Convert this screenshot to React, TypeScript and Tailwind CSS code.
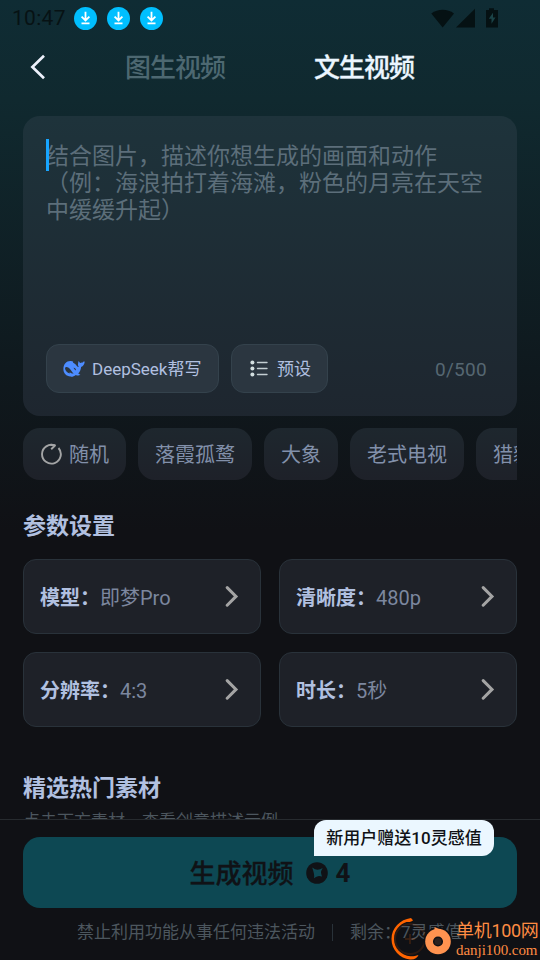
import React from 'react';

const chips = ['落霞孤鹜', '大象', '老式电视', '猎豹奔跑'];

const params = [
    { label: '模型：', value: '即梦Pro' },
    { label: '清晰度：', value: '480p' },
    { label: '分辨率：', value: '4:3' },
    { label: '时长：', value: '5秒' },
];

const DownloadBadge: React.FC = () => (
    <svg width="23" height="23" viewBox="0 0 23 23" fill="none">
        <circle cx="11.5" cy="11.5" r="11.5" fill="#00bfff" />
        <path d="M11.5 4.8V12.6M7.6 9.6l3.9 3.9 3.9-3.9M7.5 16.3h8" stroke="#fff" strokeWidth="1.8" />
    </svg>
);

const WhaleIcon: React.FC = () => (
    <svg width="22" height="18" viewBox="0 0 22 18" fill="#4d8cff">
        <path d="M0.4 9.2C0.4 4.2 3.4 1.2 7.2 1.1c1.4-0.1 2.4 0.2 3 0.6-0.4 0.3-0.4 0.7 0.1 1.1 1.5 0.9 2.9 2.1 4 3.7 0.6 0.5 1 0.5 1.5 0.3-0.8-0.9-1-2-0.7-3.2 0.1-0.9 0.2-1.9 0.5-2.6 0.7 0.6 0.8 1.5 1.5 1.9 1.5 0 2.3-0.3 3-0.9 0.4-0.4 0.9-0.5 1.6-0.3-0.2 2.6-1.5 4.6-3.6 5.2-0.3 2.9-1.3 4.9-2.9 6.5 0.7 0.6 1.6 0.7 2.2 1.4-1.4 0.9-3.2 0.8-4.6 0.1-1.6 1.3-3.5 2-5.4 1.7C3.4 16.1 0.4 13.2 0.4 9.2z" />
        <path d="M2 8.3c0.2-1 0.8-1.400 1.700-1.200 2.300 0.500 3.700 2.200 4.800 3.900 0.700 1.100 1.400 1.900 2.200 2.400-1.400 0.400-2.700-0.100-3.600-0.800-0.700-0.200-0.600 0.300-0.300 0.900C4.200 12.800 2.100 10.900 2 8.300z" fill="#2b3640" />
        <path d="M10.600 7.700c1.300-0.100 2.400 1 2.400 2.500-0.600 0.200-1.100-0.200-1.400-0.800-0.200-0.600-0.800-0.700-1-1.700z" fill="#2b3640" />
    </svg>
);

const ListIcon: React.FC = () => (
    <svg width="18" height="18" viewBox="0 0 18 18" fill="#d3dfe0">
        <circle cx="2.4" cy="2.5" r="2" />
        <circle cx="2.4" cy="8.5" r="2" />
        <circle cx="2.4" cy="14.5" r="2" />
        <path d="M7.5 2.5h9.5M7.5 8.5h9.5M7.5 14.5h9.5" stroke="#c4cfd3" strokeWidth="1.4" strokeLinecap="round" />
    </svg>
);

const RefreshIcon: React.FC = () => (
    <svg width="22" height="22" viewBox="0 0 22 22" fill="none" stroke="#a3a4a5" strokeWidth="1.9">
        <path d="M18.5 5A9.4 9.4 0 1 1 15 2.5L11.2 6.2" strokeLinejoin="round" />
        <path d="M10.5 1.7l4.5 0.8" />
    </svg>
);

const Chevron: React.FC = () => (
    <svg width="14" height="22" viewBox="0 0 14 22" fill="none" stroke="#a4a4a4" strokeWidth="3">
        <path d="M2.2 1.6L11 10.4 2.2 19.2" strokeLinecap="round" />
    </svg>
);

const CoinIcon: React.FC = () => (
    <svg width="22" height="22" viewBox="0 0 22 22">
        <circle cx="11" cy="11" r="10.8" fill="#101216" />
        <path d="M6.2 5.5Q9.5 8 11.8 7.8 14 7.4 16.7 5.9 15 8.600 15 10.500 15.200 12.800 16.200 14.600 13.800 13.900 12 14.200 9.800 14.600 8 16.200 8.400 13.700 7.900 11.600 7.400 9 6.200 5.500z" fill="#0e4853" />
    </svg>
);

const StatusBar: React.FC = () => (
    <div className="flex h-[37px] shrink-0 items-center pl-[12px] pr-[41px]">
        <span className="w-[62px] pt-px text-[21px] tracking-[0.3px] text-[#071214]">10:47</span>
        <div className="flex gap-[10px]">
            <DownloadBadge />
            <DownloadBadge />
            <DownloadBadge />
        </div>
        <svg className="ml-auto" width="68" height="22" viewBox="0 0 68 22" fill="#051113">
            <path d="M0.3 5.500C7 0.600 16.500 0.600 23 5.500L11.700 19.400z" />
            <path d="M44 0.700V19.400H25z" />
            <path d="M55 2h3V0.300h5V2h4v17.400H55z" />
            <path d="M62 4.800l-4.200 6h2.700v5l4-6.200h-2.500z" fill="#1b4347" />
        </svg>
    </div>
);

const App: React.FC = () => {
    return (
        <div className="relative flex h-[960px] w-[540px] flex-col overflow-hidden bg-[#101115] bg-[linear-gradient(to_bottom,#0f2c34_0px,#10292f_100px,#0f191e_370px,#101115_530px)] font-['Roboto','Noto_Sans_CJK_SC',sans-serif]">
            <StatusBar />

            {/* Tabs */}
            <header className="flex h-[60px] shrink-0 items-center pl-[30px] text-[26px] leading-none font-medium tracking-[-1px]">
                <svg width="16" height="26" viewBox="0 0 16 26" fill="none" stroke="#edf1fc" strokeWidth="2.7">
                    <path d="M14 1.8L2.4 13 14 24.2" />
                </svg>
                <span className="ml-[79px] pt-[2px] text-[#4d6871]">图生视频</span>
                <span className="ml-[89px] pt-[2px] text-[#ebf6ff] [-webkit-text-stroke:0.3px_#ebf6ff]">文生视频</span>
            </header>

            {/* Scrollable content */}
            <main className="min-h-0 flex-1 overflow-hidden px-[23px] pt-[19px]">
                <section className="flex h-[300px] flex-col rounded-[17px] bg-[linear-gradient(to_bottom,#1e333b,#1e262f)] px-[23px] pt-[27px] pb-[23px]">
                    <div className="relative text-[23px] leading-[27px] text-[#5c6e7a]">
                        <span className="absolute -top-[4px] left-0 h-8 w-[3px] bg-[#17a5ff]" />
                        <p>结合图片，描述你想生成的画面和动作</p>
                        <p>（例：海浪拍打着海滩，粉色的月亮在天空</p>
                        <p>中缓缓升起）</p>
                    </div>
                    <div className="mt-auto flex items-center gap-3 text-[17px] text-[#b1c0e0]">
                        <button className="flex h-[49px] w-[173px] items-center gap-[7px] rounded-[13px] border border-[#34424c] bg-[#2b3640] pl-[16px] whitespace-nowrap">
                            <WhaleIcon />
                            <span className="pt-[2px]">DeepSeek帮写</span>
                        </button>
                        <button className="flex h-[49px] w-[97px] items-center gap-[9px] rounded-[13px] border border-[#34424c] bg-[#2b3640] pl-[18px] whitespace-nowrap">
                            <ListIcon />
                            <span className="pt-[2px]">预设</span>
                        </button>
                        <span className="mr-[7px] ml-auto pt-[3px] text-[19px] tracking-[0.3px] text-[#566772]">0/500</span>
                    </div>
                </section>

                <div className="mt-3 flex h-[52px] gap-3 overflow-hidden text-[20px] text-[#8290aa]">
                    <button className="flex shrink-0 items-center gap-[7px] rounded-[17px] bg-[linear-gradient(to_bottom,#1e272e,#1e2129)] px-[17px]">
                        <RefreshIcon />
                        <span className="pt-[2px]">随机</span>
                    </button>
                    {chips.map((chip) => (
                        <button key={chip} className="shrink-0 rounded-[17px] bg-[linear-gradient(to_bottom,#1e272e,#1e2129)] px-[17px] pt-[2px]">
                            {chip}
                        </button>
                    ))}
                </div>

                <h2 className="mt-[30px] text-[23px] leading-[34px] font-bold text-[#b1c0e0]">参数设置</h2>
                <div className="mt-[15px] grid grid-cols-2 gap-[18px]">
                    {params.map((param) => (
                        <div key={param.label} className="flex h-[75px] items-center rounded-[13px] border border-[#29323a] bg-[#1e2128] pr-[21px] pl-[16px] text-[20px]">
                            <span className="pt-[3px] font-bold text-[#b1c0e0]">{param.label}</span>
                            <span className="pt-[2px] text-[#7c879f]">{param.value}</span>
                            <span className="ml-auto">
                                <Chevron />
                            </span>
                        </div>
                    ))}
                </div>

                <h2 className="mt-[45px] text-[23px] leading-[34px] font-bold text-[#b1c0e0]">精选热门素材</h2>
                <p className="mt-[3px] text-[17px] leading-[25px] text-[#4c565e]">点击下方素材，查看创意描述示例</p>
            </main>

            {/* Bottom action bar */}
            <footer className="h-[141px] shrink-0 border-t border-[#272b2f] bg-[#101115] px-[23px] pt-[17px]">
                <button className="relative flex h-[71px] w-full items-center justify-center rounded-[17px] bg-[#0d4853] text-[26px] font-medium text-[#101216]">
                    <span className="pt-[3px] [-webkit-text-stroke:0.3px_#101216]">生成视频</span>
                    <span className="mr-[8px] ml-[12px]">
                        <CoinIcon />
                    </span>
                    <span className="pt-[2px] font-bold">4</span>
                    <span className="absolute -top-[17px] right-[23px] flex h-[36px] w-[180px] items-center justify-center rounded-[12px] rounded-bl-none bg-[#ebf7ff] pt-[2px] text-[17px] font-medium whitespace-nowrap">
                        新用户赠送10灵感值
                    </span>
                </button>
                <div className="mt-[11px] flex items-center pl-[54px] text-[17px] leading-[26px] whitespace-nowrap text-[#4c565e]">
                    <span>禁止利用功能从事任何违法活动</span>
                    <span className="mr-[17px] ml-[17px] h-[17px] w-px bg-[#293239]" />
                    <span>剩余：7灵感值</span>
                </div>
            </footer>

            {/* Site watermark */}
            <div className="absolute right-[2px] bottom-0 flex h-[43px] items-center text-[#ff8c43]">
                <svg width="64" height="43" viewBox="0 0 64 43" fill="none">
                    <circle cx="19" cy="22" r="15" stroke="#ff6400" strokeOpacity="0.12" strokeWidth="2" />
                    <path d="M14 22h10M19 17v10" stroke="#ff6400" strokeOpacity="0.2" strokeWidth="1.5" />
                    <path d="M20 1C9 2.500 0.500 11 0.500 22 0.500 33 9 41.500 19 42.500c4 0.500 7.500-1.500 8.500-4.500-3 1-5.500 1.500-8 1.300C10 38.500 3 31 3 22 3 13 9 7 15.500 5c3 0.300 5.500-0.300 6.500-1.700z" fill="#ff6400" />
                    <circle cx="47" cy="24.500" r="14.500" fill="#101115" />
                    <path d="M43.500 10l10 4.500-3 4-7 0z" fill="#ff9350" />
                    <circle cx="47" cy="24.500" r="12.800" fill="#ff9350" />
                    <circle cx="47" cy="24.500" r="4.300" fill="#2b211e" stroke="#101115" strokeWidth="1.500" />
                </svg>
                <div className="flex w-[83px] flex-col pl-[1px] whitespace-nowrap">
                    <span className="text-[18px] leading-[22px] tracking-[-0.3px]">单机100网</span>
                    <span className="font-['Liberation_Serif',serif] text-[15px] leading-[16px] tracking-[-0.05px]">danji100.com</span>
                </div>
            </div>
        </div>
    );
};

export default App;
